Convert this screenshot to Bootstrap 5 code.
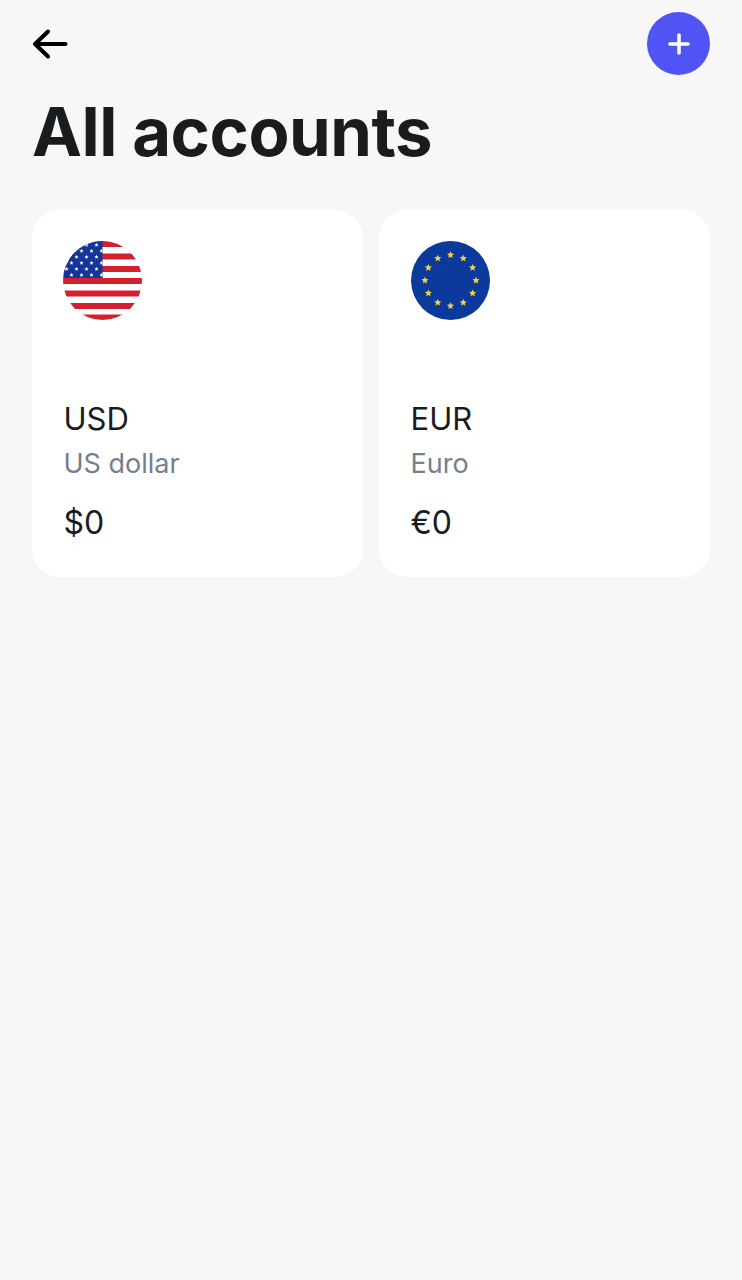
<!DOCTYPE html>
<html lang="en">
<head>
<meta charset="utf-8">
<title>All accounts</title>
<link href="https://cdn.jsdelivr.net/npm/bootstrap@5.3.0/dist/css/bootstrap.min.css" rel="stylesheet">
<style>
html,body{height:100%}
body{background:#f7f7f7;font-family:Inter,"Liberation Sans",sans-serif;color:#191c1f}
.screen{padding:12px 32px 0}
.top-row{height:63px}
.add-btn{width:63px;height:63px;border:0;padding:0;background:#5054f5}
.page-title{font-size:67px;line-height:82px;font-weight:700;letter-spacing:-.5px;margin:16px 0 0;color:#191c1f}
.acct-grid{margin-top:37px;gap:16px}
.acct-card{flex:1 1 0;height:367px;background:#fff;border-radius:28px;padding:31px}
.flag-icon{display:block;width:79px;height:79px}
.flag-shift{margin-left:1px}
.acct-code{font-size:31px;line-height:36px;margin-top:81px;padding-left:.5px}
.acct-name{font-size:27px;line-height:36px;margin-top:9px;color:#75808c;padding-left:.5px}
.acct-bal{font-size:32px;line-height:40px;margin-top:21px;padding-left:.5px}
</style>
</head>
<body>
<main class="screen">
  <div class="top-row d-flex justify-content-between align-items-center">
    <svg width="36" height="30" viewBox="0 0 36 30" fill="none" stroke="#000" stroke-width="4" stroke-linecap="round" stroke-linejoin="round" aria-label="Back"><path d="M3 15H33.500M16 2.500 3 15 16 27.500"/></svg>
    <button class="add-btn btn rounded-circle d-flex align-items-center justify-content-center" aria-label="Add">
      <svg width="24" height="24" viewBox="0 0 24 24" fill="none" stroke="#fff" stroke-width="3.600" stroke-linecap="round"><path d="M12 3V21M3 12H21"/></svg>
    </button>
  </div>
  <h1 class="page-title">All accounts</h1>
  <div class="acct-grid d-flex">
    <section class="acct-card">
      <svg class="flag-icon" viewBox="0 0 79 79" aria-label="US flag">
        <defs>
          <clipPath id="round1"><circle cx="39.500" cy="39.500" r="39.500"/></clipPath>
          <polygon id="st" points="0,-2.200 .59,-.81 2.090,-.68 .95,.31 1.290,1.780 0,1 -1.290,1.780 -.95,.31 -2.090,-.68 -.59,-.81"/>
          <pattern id="stars" width="10" height="12" patternUnits="userSpaceOnUse" x="1" y="1">
            <use href="#st" x="2.500" y="3" fill="#fff"/>
            <use href="#st" x="7.500" y="9" fill="#fff"/>
          </pattern>
        </defs>
        <g clip-path="url(#round1)">
          <rect width="79" height="79" fill="#fff"/>
          <g fill="#d3202f">
            <rect y="0" width="79" height="6"/><rect y="12.500" width="79" height="6"/><rect y="25" width="79" height="6"/><rect y="37" width="79" height="6"/><rect y="49.500" width="79" height="6"/><rect y="62" width="79" height="6"/><rect y="73.500" width="79" height="6"/>
          </g>
          <rect width="39.500" height="37" fill="#14359a"/>
          <rect width="39.500" height="37" fill="url(#stars)"/>
        </g>
      </svg>
      <div class="acct-code">USD</div>
      <div class="acct-name">US dollar</div>
      <div class="acct-bal">$0</div>
    </section>
    <section class="acct-card">
      <svg class="flag-icon flag-shift" viewBox="0 0 79 79" aria-label="EU flag">
        <circle cx="39.500" cy="39.500" r="39.500" fill="#0b3a9c"/>
        <g fill="#f6d33c" transform="translate(39.500 39.500) scale(1.700)">
          <use href="#st" x="0" y="-15"/><use href="#st" x="7.500" y="-13"/><use href="#st" x="13" y="-7.500"/><use href="#st" x="15" y="0"/><use href="#st" x="13" y="7.500"/><use href="#st" x="7.500" y="13"/><use href="#st" x="0" y="15"/><use href="#st" x="-7.500" y="13"/><use href="#st" x="-13" y="7.500"/><use href="#st" x="-15" y="0"/><use href="#st" x="-13" y="-7.500"/><use href="#st" x="-7.500" y="-13"/>
        </g>
      </svg>
      <div class="acct-code">EUR</div>
      <div class="acct-name">Euro</div>
      <div class="acct-bal">€0</div>
    </section>
  </div>
</main>
<script src="https://cdn.jsdelivr.net/npm/bootstrap@5.3.0/dist/js/bootstrap.bundle.min.js"></script>
</body>
</html>
